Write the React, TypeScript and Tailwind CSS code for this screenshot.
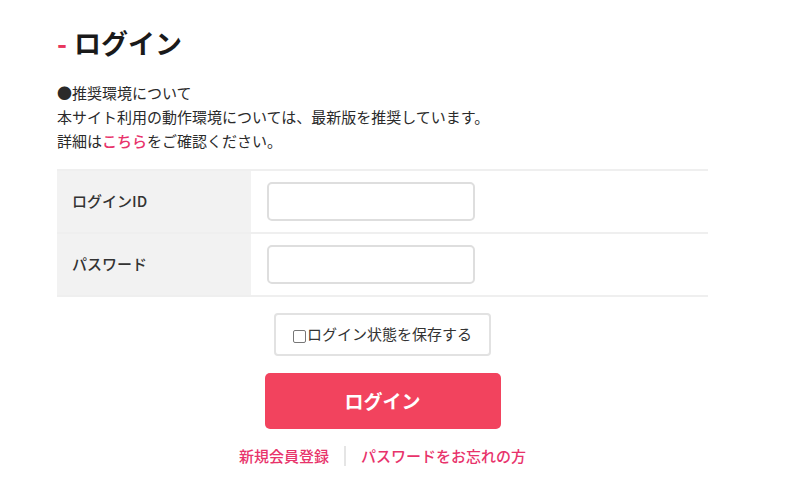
export default function App() {
  return (
    <div className="w-[800px] h-[500px] bg-white text-[#222] font-['Noto_Sans_CJK_JP','Noto_Sans',sans-serif] overflow-hidden">
      <div className="w-[651px] ml-[57px] pt-[24px]">
        <h1 className="flex items-center text-[27px] font-bold leading-[38px] text-[#1a1a1a]">
          <span className="text-[#e8365d] mr-[7px]">-</span>
          ログイン
        </h1>
        <div className="mt-[19px] text-[15px] leading-[24px] text-[#2a2a2a]">
          <p>●推奨環境について</p>
          <p>本サイト利用の動作環境については、最新版を推奨しています。</p>
          <p>
            詳細は<a className="text-[#e8336b] font-medium">こちら</a>をご確認ください。
          </p>
        </div>

        <div className="mt-[16px] border-t-2 border-[#efefef]">
          {['ログインID', 'パスワード'].map(label => (
            <div key={label} className="flex h-[63px] border-b-2 border-[#efefef]">
              <div className="w-[194px] bg-[#f2f2f2] flex items-center pl-[15px] text-[15px] font-medium text-[#333]">
                {label}
              </div>
              <div className="flex-1 flex items-center pl-[16px]">
                <input
                  type={label === 'パスワード' ? 'password' : 'text'}
                  className="w-[208px] h-[39px] rounded-[5px] border-2 border-[#dedede] bg-white outline-none"
                />
              </div>
            </div>
          ))}
        </div>

        <div className="flex flex-col items-center">
          <label className="mt-[16px] w-[217px] h-[43px] flex items-center justify-center rounded-[4px] border-2 border-[#e2e2e2] text-[15px] text-[#333]">
            <span className="w-[13px] h-[13px] border border-[#777] rounded-[2px] mt-[3px] mr-[1px]" />
            ログイン状態を保存する
          </label>
          <button className="mt-[17px] w-[236px] h-[56px] rounded-[5px] bg-[#f2435e] text-white text-[19px] font-bold">
            ログイン
          </button>
          <div className="mt-[16px] flex items-center text-[15px] font-medium text-[#e8336b]">
            <a>新規会員登録</a>
            <span className="w-[2px] h-[20px] bg-[#e5e5e5] mx-[15px]" />
            <a>パスワードをお忘れの方</a>
          </div>
        </div>
      </div>
    </div>
  );
}
